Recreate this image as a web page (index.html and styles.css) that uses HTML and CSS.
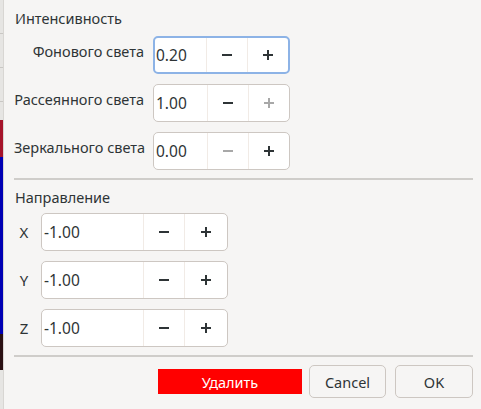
FILE: index.html
```html
<!DOCTYPE html>
<html lang="ru">
<head>
<meta charset="utf-8">
<link rel="stylesheet" href="styles.css">
</head>
<body>
<div class="screen">
  <div class="strip">
    <div class="seg seg-gray"></div>
    <div class="seg seg-red"></div>
    <div class="seg seg-blue"></div>
    <div class="seg seg-dark"></div>
    <div class="seg seg-gray2"></div>
  </div>
  <div class="dialog">
    <div class="heading h1">Интенсивность</div>
    <div class="int-grid">
      <div class="lbl">Фонового света</div>
      <div class="spin small focused">
        <div class="entry">0.20</div>
        <div class="btn"><svg viewBox="0 0 12 12"><path d="M1 6h10"/></svg></div>
        <div class="btn"><svg viewBox="0 0 12 12"><path d="M1 6h10M6 1v10"/></svg></div>
      </div>
      <div class="lbl">Рассеянного света</div>
      <div class="spin small">
        <div class="entry">1.00</div>
        <div class="btn"><svg viewBox="0 0 12 12"><path d="M1 6h10"/></svg></div>
        <div class="btn disabled"><svg viewBox="0 0 12 12"><path d="M1 6h10M6 1v10"/></svg></div>
      </div>
      <div class="lbl">Зеркального света</div>
      <div class="spin small">
        <div class="entry">0.00</div>
        <div class="btn disabled"><svg viewBox="0 0 12 12"><path d="M1 6h10"/></svg></div>
        <div class="btn"><svg viewBox="0 0 12 12"><path d="M1 6h10M6 1v10"/></svg></div>
      </div>
    </div>
    <div class="sep sep1"></div>
    <div class="heading h2">Направление</div>
    <div class="dir-grid">
      <div class="axis">X</div>
      <div class="spin wide">
        <div class="entry">-1.00</div>
        <div class="btn"><svg viewBox="0 0 12 12"><path d="M1 6h10"/></svg></div>
        <div class="btn"><svg viewBox="0 0 12 12"><path d="M1 6h10M6 1v10"/></svg></div>
      </div>
      <div class="axis">Y</div>
      <div class="spin wide">
        <div class="entry">-1.00</div>
        <div class="btn"><svg viewBox="0 0 12 12"><path d="M1 6h10"/></svg></div>
        <div class="btn"><svg viewBox="0 0 12 12"><path d="M1 6h10M6 1v10"/></svg></div>
      </div>
      <div class="axis">Z</div>
      <div class="spin wide">
        <div class="entry">-1.00</div>
        <div class="btn"><svg viewBox="0 0 12 12"><path d="M1 6h10"/></svg></div>
        <div class="btn"><svg viewBox="0 0 12 12"><path d="M1 6h10M6 1v10"/></svg></div>
      </div>
    </div>
    <div class="sep sep2"></div>
    <div class="actions">
      <button class="delete">Удалить</button>
      <button class="plain cancel">Cancel</button>
      <button class="plain ok">OK</button>
    </div>
  </div>
</div>
</body>
</html>
```

FILE: styles.css
```css
html, body {
  margin: 0;
  padding: 0;
  background: #f6f5f4;
}
.screen {
  width: 481px;
  height: 409px;
  display: flex;
  overflow: hidden;
  font-family: "Noto Sans", "DejaVu Sans", sans-serif;
  font-size: 14.5px;
  color: #2e3436;
}
.strip {
  width: 3px;
  display: flex;
  flex-direction: column;
  flex: none;
  border-right: 1px solid #d8d6d3;
}
.seg { flex: none; }
.seg-gray {
  height: 120px;
  background: repeating-linear-gradient(#e6e5e3 0 33px, #c9c7c4 33px 34px);
}
.seg-red { height: 37px; background: #a5132a; }
.seg-blue { height: 177px; background: #0000b4; }
.seg-dark { height: 36px; background: #2a1012; }
.seg-gray2 { height: 39px; background: #e6e5e3; }

.dialog {
  flex: 1;
  display: flex;
  flex-direction: column;
  padding-left: 10px;
  padding-right: 8px;
}
.heading {
  line-height: 18px;
  padding-left: 1px;
}
.h1 { margin-top: 9px; }
.int-grid {
  margin-top: 9px;
  display: grid;
  grid-template-columns: 130px 137px;
  column-gap: 9px;
  row-gap: 10px;
}
.lbl {
  text-align: right;
  line-height: 18px;
  padding-top: 6px;
  white-space: nowrap;
}
.spin {
  height: 38px;
  box-sizing: border-box;
  border: 1px solid #cdc7c2;
  border-radius: 5px;
  display: flex;
  background: #ffffff;
  overflow: hidden;
}
.spin.focused {
  border: 2px solid #8db3e6;
}
.entry {
  flex: 1;
  display: flex;
  align-items: center;
  padding-left: 2px;
  font-size: 15.5px;
  color: #2e3436;
}
.spin.focused .entry { padding-left: 1px; }
.btn {
  width: 40px;
  flex: none;
  display: flex;
  align-items: center;
  justify-content: center;
  border-left: 1px solid #f1ebe6;
}
.btn svg {
  width: 12px;
  height: 12px;
  stroke: #2e3436;
  stroke-width: 2;
  fill: none;
}
.btn.disabled svg { stroke: #a8a8a8; }
.sep {
  height: 2px;
  background: #cfcdca;
  flex: none;
}
.sep1 { margin-top: 8px; }
.h2 { margin-top: 8px; }
.dir-grid {
  margin-top: 7px;
  display: grid;
  grid-template-columns: 20px 187px;
  column-gap: 7px;
  row-gap: 10px;
}
.axis {
  display: flex;
  align-items: center;
  justify-content: center;
  font-size: 15px;
}
.spin.wide .btn:last-child { width: 42px; }
.sep2 { margin-top: 8px; }
.actions {
  margin-top: 8px;
  display: flex;
  align-items: center;
  justify-content: flex-end;
}
button {
  font-family: inherit;
  font-size: 14.5px;
  margin: 0;
}
.delete {
  width: 144px;
  height: 25px;
  background: #ff0000;
  color: #ffffff;
  border: none;
  border-radius: 0;
  padding: 0;
}
.plain {
  height: 33px;
  border: 1px solid #cdc7c2;
  border-radius: 5px;
  background: #f6f5f4;
  color: #2e3436;
  padding: 0;
}
.cancel { width: 77px; margin-left: 7px; }
.ok { width: 78px; margin-left: 9px; }
```
